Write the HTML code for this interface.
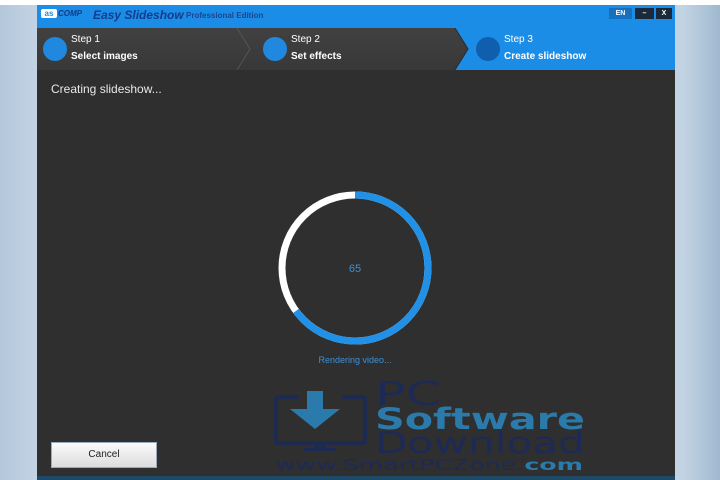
<!DOCTYPE html>
<html><head><meta charset="utf-8"><style>
body{margin:0;width:720px;height:480px;overflow:hidden;background:linear-gradient(90deg,#b4c8dc 0,#c2d3e3 5%,#c2d3e3 95%,#9fb8cf 100%);font-family:"Liberation Sans",sans-serif;position:relative}
.top{position:absolute;left:0;top:0;width:720px;height:5px;background:#fff}
.win{position:absolute;left:37px;top:5px;width:638px;height:475px;background:#2f2f2f}
.title{position:absolute;left:0;top:0;width:638px;height:23px;background:#1c8de6}
.steps{position:absolute;left:0;top:23px;width:638px;height:42px;background:linear-gradient(#414141,#383838)}
.s{position:absolute;color:#fff;font-size:10px}
.b{font-weight:bold}
.dot{position:absolute;width:24px;height:24px;border-radius:50%;background:#2188df;top:9px}
.btn{position:absolute;top:3px;height:11px;font-size:7px;color:#fff;font-weight:bold;text-align:center;line-height:11px}
</style></head><body>
<div class="top"></div>
<div class="win">
 <div class="title">
  <div style="position:absolute;left:4px;top:4px;width:16px;height:9px;background:#fff;border-radius:2px;color:#1c8de6;font-size:8px;font-weight:bold;line-height:9px;text-align:center">as</div>
  <div style="position:absolute;left:21px;top:4px;font-size:8px;color:#133a8a;font-weight:bold;font-style:italic">COMP</div>
  <div style="position:absolute;left:56px;top:3px;font-size:12px;color:#143c8c;font-weight:bold;font-style:italic">Easy Slideshow</div>
  <div style="position:absolute;left:149px;top:6px;font-size:8px;color:#1a4490;font-weight:bold">Professional Edition</div>
  <div class="btn" style="left:572px;width:23px;background:#1570c0">EN</div>
  <div class="btn" style="left:598px;width:19px;background:#1b2a3a">–</div>
  <div class="btn" style="left:619px;width:16px;background:#1b2a3a">X</div>
 </div>
 <div class="steps">
  <svg width="638" height="42" style="position:absolute;left:0;top:0">
   <polygon points="418,0 638,0 638,42 418,42 431,21" fill="#1c8de6"/>
   <polyline points="200,0 213,21 200,42" fill="none" stroke="#555" stroke-width="1"/>
   <polyline points="418,0 431,21 418,42" fill="none" stroke="#2a2a2a" stroke-width="1"/>
  </svg>
  <div class="dot" style="left:6px"></div>
  <div class="dot" style="left:226px"></div>
  <div class="dot" style="left:439px;background:#0f5fae"></div>
  <div class="s" style="left:34px;top:6px">Step 1</div>
  <div class="s b" style="left:34px;top:23px">Select images</div>
  <div class="s" style="left:254px;top:6px">Step 2</div>
  <div class="s b" style="left:254px;top:23px">Set effects</div>
  <div class="s" style="left:467px;top:6px">Step 3</div>
  <div class="s b" style="left:467px;top:23px">Create slideshow</div>
 </div>
 <div style="position:absolute;left:14px;top:77px;color:#e8e8e8;font-size:12px">Creating slideshow...</div>
 <svg width="638" height="475" style="position:absolute;left:0;top:0">
  <circle cx="318" cy="263" r="73" fill="none" stroke="#fff" stroke-width="7"/>
  <circle cx="318" cy="263" r="73" fill="none" stroke="#2191e8" stroke-width="7" stroke-dasharray="298 500" transform="rotate(-90 318 263)"/>
  <text x="318" y="267" fill="#3f8fd6" font-size="11" text-anchor="middle" font-family="Liberation Sans">65</text>
  <text x="318" y="358" fill="#3f8fd6" font-size="9" text-anchor="middle" font-family="Liberation Sans">Rendering video...</text>
  <path d="M262 392 H242 Q239 392 239 395 V435 Q239 438 242 438 H325 Q328 438 328 435 V395 Q328 392 325 392 H305" fill="none" stroke="#1d2a52" stroke-width="4"/>
  <rect x="277" y="438" width="12" height="6" fill="#1d2a52"/><rect x="267" y="443" width="32" height="3" fill="#1d2a52"/>
  <polygon points="270,386 286,386 286,404 303,404 278,424 253,404 270,404" fill="#2a7bab"/>
  <text x="338" y="400" fill="#1d2a55" font-size="33" font-family="DejaVu Sans" textLength="66" lengthAdjust="spacingAndGlyphs">PC</text>
  <text x="338" y="424" fill="#2a7bab" font-size="29" font-weight="bold" font-family="DejaVu Sans" textLength="210" lengthAdjust="spacingAndGlyphs">Software</text>
  <text x="338" y="448" fill="#1d2a55" font-size="29" font-family="DejaVu Sans" textLength="210" lengthAdjust="spacingAndGlyphs">Download</text>
  <text x="238" y="465" font-size="15" font-family="DejaVu Sans" textLength="308" lengthAdjust="spacingAndGlyphs"><tspan fill="#1d2a55">www.SmartPCZone.</tspan><tspan fill="#2a7bab" font-weight="bold">com</tspan></text>
 </svg>
 <div style="position:absolute;left:14px;top:437px;width:104px;height:24px;background:linear-gradient(#fbfbfb,#dcdcdc);border:1px solid #9ab;font-size:10px;color:#222;text-align:center;line-height:24px">Cancel</div>
 <div style="position:absolute;left:0;top:471px;width:638px;height:4px;background:#1e4a6a"></div>
</div>
</body></html>
